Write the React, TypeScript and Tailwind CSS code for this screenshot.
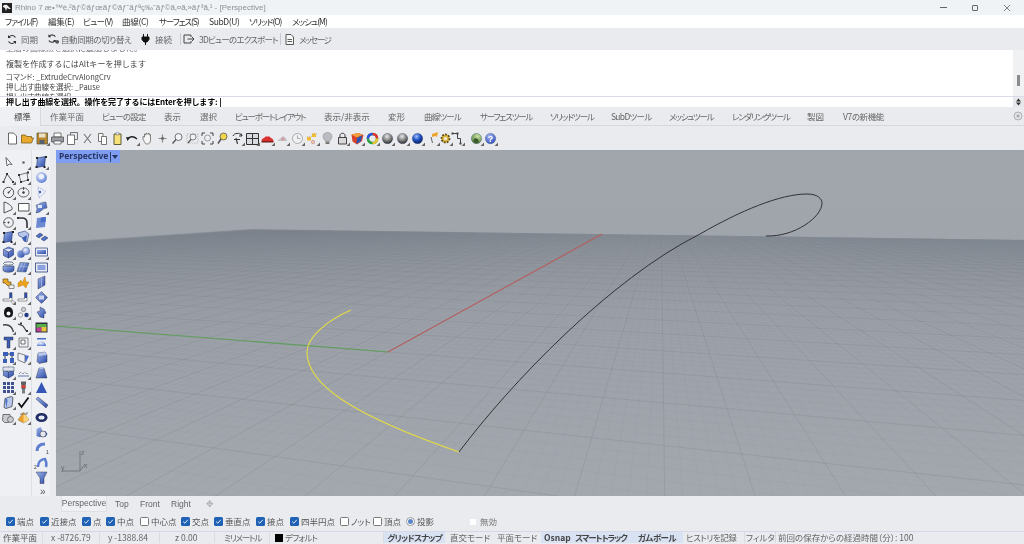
import React from "react";

const S = ({ children, t = true }: { children?: React.ReactNode; t?: boolean }) => (
  <svg width="15" height="15" viewBox="0 0 15 15" className="block shrink-0">
    {children}
    {t && <path d="M15 15h-3.500l3.500-3.500z" fill="#666" />}
  </svg>
);

const blue = "url(#gBlue)";
const Surf = () => <path d="M3.5 3l8-1.5-1 9.5-8 1.5z" fill={blue} stroke="#2c3f78" strokeWidth=".7" />;
const Box = () => <path d="M2.5 4.5l5-2.5 5 2v6l-5 3-5-2.5zM2.5 4.5l5 2.5 5-3M7.5 7v6" fill={blue} stroke="#27386e" strokeWidth=".6" />;
const Ball = ({ f = blue }: { f?: string }) => <circle cx="7.5" cy="7.5" r="5.2" fill={f} stroke="#33436f" strokeWidth=".3" />;
const Ln = ({ d, w = 0.9, c = "#444" }: { d: string; w?: number; c?: string }) => (
  <path d={d} fill="none" stroke={c} strokeWidth={w} />
);

const top: React.ReactNode[] = [
  <S t={false}><path d="M3.5 2h5l3 3v8h-8z" fill="#fff" stroke="#444" strokeWidth=".8" /></S>,
  <S t={false}><path d="M1.5 12V4h4l1 1.5h5V7h2l-2 5z" fill="#e8a92c" stroke="#6e5210" strokeWidth=".7" /></S>,
  <S><path d="M2 2h10.5v11H2z" fill="#b8862b" stroke="#58503a" strokeWidth=".7" /><path d="M4 2.5h6.5v4H4z" fill="#e9e2c8" /><path d="M4.5 9h5v4h-5z" fill="#55606e" /></S>,
  <S t={false}><path d="M4 2h7v4H4z" fill="#fff" stroke="#444" strokeWidth=".7" /><path d="M1.5 6h12v5h-12z" fill="#9a9da3" stroke="#444" strokeWidth=".7" /><path d="M4 10h7v3H4z" fill="#fff" stroke="#444" strokeWidth=".7" /></S>,
  <S t={false}><path d="M2.5 4h7v9.5h-7z" fill="#fff" stroke="#555" strokeWidth=".8" /><path d="M5.5 4V1.500h7v7h-3" fill="none" stroke="#555" strokeWidth=".8" /></S>,
  <S t={false}><Ln d="M4 3l7 9M11 3l-7 9" w={1.1} c="#777" /></S>,
  <S t={false}><path d="M3.5 2.5h4.500v8h-4.500z" fill="#fff" stroke="#555" strokeWidth=".8" /><path d="M6.5 5.500h5v8h-5z" fill="#fff" stroke="#555" strokeWidth=".8" /></S>,
  <S t={false}><path d="M4 3h7v10.500H4z" fill="#f5e37a" stroke="#4d4a2c" strokeWidth=".9" /><path d="M6 1.800h3v2H6z" fill="#fff" stroke="#555" strokeWidth=".5" /></S>,
  <S><Ln d="M2.5 8.500C4 5.500 8 4.500 12 8" w={1.5} c="#222" /><path d="M1 6l4 .5-2.500 3.500z" fill="#222" /></S>,
  <S t={false}><path d="M3 8V5.500l1.500.5V3l1.500 1V2l1.500 1 1.500-1v2l1.500-.5V9c0 3-1.500 4-3.500 4S5 12 3 8z" fill="#f4f4f4" stroke="#555" strokeWidth=".7" /></S>,
  <S t={false}><Ln d="M7.5 3.500v8M3.500 7.500h8" w={1.2} c="#8a8a8a" /><circle cx="7.5" cy="7.5" r="1.4" fill="#666" /></S>,
  <S t={false}><circle cx="8.5" cy="6" r="3.5" fill="#f1f3f7" stroke="#666" strokeWidth=".9" /><Ln d="M6 8.500l-3.500 4" w={1.4} c="#555" /></S>,
  <S t={false}><path d="M2 3h11v9H2z" fill="none" stroke="#999" strokeWidth=".6" strokeDasharray="1.5 1" /><circle cx="8" cy="6" r="3" fill="#f1f3f7" stroke="#666" strokeWidth=".8" /><Ln d="M6 8.500l-3 3.500" w={1.2} c="#555" /></S>,
  <S t={false}><Ln d="M2 5V2h3M10 2h3v3M13 10v3h-3M5 13H2v-3" w={1} c="#444" /><circle cx="7.5" cy="7" r="3" fill="#eef0f5" stroke="#777" strokeWidth=".7" /></S>,
  <S t={false}><circle cx="8.5" cy="5.5" r="3.5" fill="#f2d64b" stroke="#555" strokeWidth=".8" /><Ln d="M6 8l-3 4.500" w={1.5} c="#555" /></S>,
  <S><Ln d="M3 5c1-3 7-4 9 0M12 5l-1-2.500M12 5l-3 0" w={1} c="#333" /><Ln d="M6 7l1.500 6M4 8.500h6" w={1.1} c="#333" /></S>,
  <S><path d="M1.5 2.500h12v11h-12z" fill="#d8dadf" stroke="#333" strokeWidth="1" /><Ln d="M7.5 2.500v11M1.500 7.500h12" w={1} c="#333" /></S>,
  <S><path d="M1.5 10c0-2.500 2.500-2.500 4-4.500h4c1.500 2 4 2 4 4.500z" fill="#d9302e" /><path d="M1.5 10h12v1.500h-12z" fill="#7a1f1d" /></S>,
  <S><path d="M3 10c0-2 3-2 4-4.500h2c1.500 2 3 2.500 3 4.500z" fill="#bfc1c7" /><circle cx="8" cy="8" r="1.5" fill="#d99" /></S>,
  <S><circle cx="7.5" cy="7.5" r="5" fill="#f0f1f3" stroke="#999" strokeWidth=".8" /><Ln d="M7.5 4.500v3h3" w={.8} c="#999" /></S>,
  <S><path d="M2 5.500h5v-3h5" fill="none" stroke="#a88" strokeWidth=".5" strokeDasharray="1 1" /><path d="M7 2.500h4v3.500H7z" fill="#eebb33" /><path d="M2 6h4v3.500H2z" fill="#eebb33" /><circle cx="8" cy="11" r="1.7" fill="#e8c8a8" stroke="#b77" strokeWidth=".5" /></S>,
  <S t={false}><path d="M7.5 1.500c3 0 4.500 2 4.500 4 0 2-1.500 3-2 4.500H5C4.500 8.500 3 7.500 3 5.500c0-2 1.500-4 4.500-4z" fill="#b9bcc2" stroke="#888" strokeWidth=".5" /><path d="M5.5 10.500h4v2.500h-4z" fill="#777" /></S>,
  <S><path d="M3.5 6.500h8v6.500h-8z" fill="#d8d8d8" stroke="#333" strokeWidth=".9" /><Ln d="M5 6.500V4.500c0-3 5-3 5 0v2" w={1} c="#333" /></S>,
  <S><path d="M1.5 3.500l7-1.500 5 2-1.500 6-5 3.500-4.500-3z" fill="#d9402a" /><path d="M7 7l5-3-1 6-4.500 3z" fill="#2b55b5" /><path d="M1.5 3.500l7-1.500 4 2-6 2.500z" fill="#f2a138" /></S>,
  <S><circle cx="7.5" cy="7.5" r="4.6" fill="none" stroke="#2f9e44" strokeWidth="2.5" /><path d="M7.5 2.900a4.600 4.600 0 0 1 4.600 4.600" fill="none" stroke="#e8312f" strokeWidth="2.5" /><path d="M12.1 7.500a4.600 4.600 0 0 1-4.600 4.600" fill="none" stroke="#e8c52f" strokeWidth="2.5" /><path d="M2.9 7.500a4.600 4.600 0 0 1 4.600-4.600" fill="none" stroke="#2f4de8" strokeWidth="2.5" /></S>,
  <S><Ball f="url(#gGray)" /></S>,
  <S><Ball f="url(#gGray)" /></S>,
  <S><Ball f="url(#gDeep)" /></S>,
  <S><path d="M7 3l6-2-1 5-1.500-1-3.500 1z" fill="#eda52f" /><path d="M6 6l1.500 6" stroke="#666" fill="none" /></S>,
  <S><circle cx="7.5" cy="7.5" r="4" fill="#e0b93f" stroke="#5a4a18" strokeWidth="1.8" strokeDasharray="1.8 1.2" /><circle cx="7.5" cy="7.5" r="1.5" fill="#eee" /></S>,
  <S><Ln d="M2.5 2.500h5v5h3v5" w={1} c="#444" /><path d="M1.5 1.500h2v2h-2zM6.500 1.500h2v2h-2zM9.500 11.500h2v2h-2z" fill="#444" /></S>,
  <S><Ball f="url(#gGreen)" /><path d="M4 10l2-3 3 1 1 3-3 1.500z" fill="#3b5a2a" /></S>,
  <S><Ball f="url(#gHelp)" /><text x="7.5" y="10.600" textAnchor="middle" fontSize="9" fontWeight="700" fill="#fff" fontFamily="Liberation Sans">?</text></S>,
];

const col1: React.ReactNode[] = [
  <S t={false}><path d="M5 2.500l1 8.500 2-2 3 .5z" fill="#fff" stroke="#444" strokeWidth=".8" /></S>,
  <S><Ln d="M2.5 12l3.500-8 6 8" /><path d="M5 3h2v2H5zM1.500 11h2v2h-2zM11 11h2v2h-2z" fill="#333" /></S>,
  <S><circle cx="7.5" cy="7.5" r="5.2" fill="none" stroke="#444" strokeWidth=".9" /><Ln d="M7.5 7.500l3-3" /><circle cx="7.5" cy="7.5" r="1" fill="#444" /></S>,
  <S><Ln d="M3 2v11l8-3.500c1-2-2-6-8-7.500z" /></S>,
  <S><circle cx="7.5" cy="7.5" r="4.8" fill="none" stroke="#555" strokeWidth=".9" /><circle cx="7.5" cy="7.5" r="1" fill="#444" /><Ln d="M2.500 7.500h2" /></S>,
  <S><Surf /><path d="M2 2h2v2H2zM11 1h2v2h-2zM1.500 11h2v2h-2zM9.500 11h2v2h-2z" fill="#222" /></S>,
  <S><Box /></S>,
  <S><ellipse cx="7.5" cy="3.5" rx="5" ry="1.7" fill="#eef0f5" stroke="#345" strokeWidth=".7" /><path d="M2 6h11v4c0 3-11 3-11 0z" fill={blue} stroke="#234" strokeWidth=".5" /></S>,
  <S t={false}><path d="M2 4h5v3h3v3l-3 1-3-3H2z" fill="#e8a92c" stroke="#6e5210" strokeWidth=".7" /><path d="M8 10h5v3.500H8z" fill="#f2f2f2" stroke="#666" strokeWidth=".7" /></S>,
  <S><path d="M2 11V9h6.500V2.500h2.500V11z" fill="#fff" stroke="#555" strokeWidth=".6" /><path d="M8.500 3h2.500v5H8.500z" fill="#2f4d9e" /><circle cx="12" cy="12" r="1.4" fill="#fff" stroke="#666" strokeWidth=".5" /></S>,
  <S><path d="M7.5 2c3 0 4.500 2.500 4.500 6 0 3-1.500 4.500-4.500 4.500S3 11 3 8c0-3.500 1.500-6 4.500-6z" fill="#15151a" /><circle cx="7.5" cy="8.5" r="2" fill="#fff" /></S>,
  <S><Ln d="M2 5c5-1 9 1 10.500 7" w={1.4} c="#444" /></S>,
  <S><path d="M3 2h9v3H9v8H6V5H3z" fill="#3d5fb5" stroke="#223" strokeWidth=".4" /></S>,
  <S><path d="M2 2h5v4H2z" fill="#3d5fb5" /><path d="M9 8h4v5H9z" fill="#3d5fb5" /><path d="M2 9h4v4H2z" fill="#3d5fb5" /><path d="M9 2h4v4H9z" fill="#3d5fb5" /><Ln d="M4 6v3M11 6v2M7 4h2" c="#222" /></S>,
  <S><Box /><path d="M2 2h11v4H2z" fill="#dfe4ef" stroke="#345" strokeWidth=".5" /></S>,
  <S><path d="M2 2h3v3H2zM6 2h3v3H6zM10 2h3v3h-3zM2 6h3v3H2zM6 6h3v3H6zM10 6h3v3h-3zM2 10h3v3H2zM6 10h3v3H6zM10 10h3v3h-3z" fill="#3f5190" /></S>,
  <S><path d="M4 3.500l6-2 2 1-1 9-6 2-2-1z" fill="#b9c7ea" stroke="#334" strokeWidth=".7" /><path d="M4 3.500l2.500 1-1 9z" fill="#4a6dc7" /></S>,
  <S><path d="M2 4.500h7l1 6-2.500 2H3.500l-2-2z" fill="#c8cad0" stroke="#555" strokeWidth=".8" /><circle cx="9.5" cy="9.5" r="3" fill="#c8cad0" stroke="#555" strokeWidth=".7" /></S>,
];

const col2: React.ReactNode[] = [
  <S><circle cx="7.5" cy="7.5" r="1.3" fill="#666" /></S>,
  <S><Ln d="M3 5l9-2.500M3 5l2 7 7-2-1-7" w={.7} /><path d="M2 4h2v2H2zM11 1.500h2v2h-2zM11 9h2v2h-2zM4 11h2v2H4z" fill="#333" /></S>,
  <S><ellipse cx="7.5" cy="7.5" rx="5.5" ry="4.5" fill="none" stroke="#555" strokeWidth=".9" /><circle cx="7.5" cy="7.5" r="1.2" fill="#333" /><Ln d="M7.500 2v3" /></S>,
  <S><path d="M2.500 3.500h10.500v7.500H2.500z" fill="#fff" stroke="#444" strokeWidth=".9" /></S>,
  <S><Ln d="M2 3h4c3 0 5 2 5 5v5" w={1.6} c="#333" /><path d="M1 2h2v2H1z" fill="#333" /></S>,
  <S><path d="M2 3l7-2 4 3-2 8-3-1-2-4-3-1z" fill="#b8c6ea" stroke="#2c3f78" strokeWidth=".6" /><path d="M6 8l5-3-1 7-2-1z" fill="#3d5fb5" /></S>,
  <S><circle cx="5" cy="9" r="3.8" fill={blue} /><circle cx="10" cy="6" r="3.8" fill="url(#gLight)" stroke="#345" strokeWidth=".3" /></S>,
  <S><path d="M4 2.500l9 .5-3 9-9-.5z" fill={blue} stroke="#345" strokeWidth=".5" /><Ln d="M6 3l-3 8.500M9 3l-3 9M3 6l9 1" w={.4} c="#dde" /></S>,
  <S t={false}><path d="M2 8l3-3 1 3 3-6 1 5 3 0-2 3-1 3-3-3-5 2z" fill="#eda31b" stroke="#a66d10" strokeWidth=".4" /></S>,
  <S><path d="M2 11V9h6.500V2.500h2.500V11z" fill="#fff" stroke="#555" strokeWidth=".6" /><path d="M8.500 3h2.500v5H8.500z" fill="#2f4d9e" /></S>,
  <S><circle cx="7.5" cy="4.5" r="2.2" fill="#c9ccd4" stroke="#555" strokeWidth=".5" /><circle cx="4.5" cy="10" r="2.2" fill="#f2f2f2" stroke="#555" strokeWidth=".5" /><circle cx="10.5" cy="10" r="2.2" fill="#243a85" /></S>,
  <S><Ln d="M2 4l5 2 4 6" w={1.3} c="#444" /><path d="M4 2.500h2v2H4zM10 10h2v2h-2z" fill="#333" /></S>,
  <S><path d="M3 3h9v9H3z" fill="none" stroke="#555" strokeWidth=".7" /><path d="M5 5h4v4H5z" fill="#fff" stroke="#333" strokeWidth=".7" /></S>,
  <S><path d="M2 3l7 2v8l-7-3z" fill="#eef0f5" stroke="#555" strokeWidth=".7" /><path d="M9 5l4 1-3 6-1-.5z" fill="#4a6dc7" /></S>,
  <S><path d="M2 10h11v2H2z" fill="#a9b4d1" /><path d="M3 9l2-2 2 2 2-2 2 2 1-1" fill="none" stroke="#445" strokeWidth=".8" strokeDasharray="1 1" /></S>,
  <S><path d="M5 1.500h5v3H5zM5.500 4.500h4V9h-4z" fill="#5c6064" /><path d="M5.500 5h4v3h-4z" fill="#d14138" /><path d="M6 9h3v4.500H6z" fill="#7a7e82" /></S>,
  <S t={false}><Ln d="M2.500 8l3 4L12.500 2.500" w={1.8} c="#111" /></S>,
  <S><path d="M7.500 2l5.500 8-5.500 3L2 10z" fill="#eca02c" stroke="#775" strokeWidth=".5" /><path d="M7.500 2l5.500 8-5.500 3z" fill="#f7d27a" /><Ln d="M4 4h7M11 4V2" w={.7} c="#555" /></S>,
];

const col3: React.ReactNode[] = [
  <S><Surf /><path d="M2 2h2v2H2zM11 1h2v2h-2zM1.500 11h2v2h-2zM9.500 11h2v2h-2z" fill="#222" /></S>,
  <S t={false}><circle cx="7.5" cy="7.5" r="5.4" fill="url(#gLight)" /><circle cx="7.5" cy="6.5" r="2.5" fill="#eef3ff" /></S>,
  <S t={false}><path d="M4 2l8 4.500L5 13z" fill="#eaeefa" stroke="#6b86c9" strokeWidth=".6" strokeDasharray="1.5 1" /><circle cx="6" cy="7" r="1.2" fill="#3d5fb5" /></S>,
  <S><path d="M2 5c3 0 4-3 10-3l1 6c-5 0-6 5-11 5l1-4z" fill={blue} stroke="#345" strokeWidth=".4" /><path d="M4 5h4v3H4z" fill="#dfe6f7" /></S>,
  <S t={false}><path d="M3 3l9-1-1 10-9 1z" fill="#6d89d1" /><path d="M7 2.500l5-.5-.5 5-5 .5z" fill="#4a6dc7" /></S>,
  <S t={false}><path d="M2 6l4-3 3 2-4 3zM7 9l4-3 3 2-4 3z" fill="#4a6dc7" stroke="#223" strokeWidth=".4" /></S>,
  <S><path d="M1.500 3h12v8h-12z" fill="#e8ebf4" stroke="#2c3f78" strokeWidth=".7" /><path d="M3 5h9v4H3z" fill={blue} /></S>,
  <S t={false}><path d="M1.500 3h12v9h-12z" fill="#e8ebf4" stroke="#2c3f78" strokeWidth=".8" /><path d="M3.500 5h8v5h-8z" fill="#8aa3e0" /></S>,
  <S t={false}><path d="M4 4l7-3v9l-7 4z" fill={blue} stroke="#223" strokeWidth=".4" /><Ln d="M7.500 2.500v10" w={.5} c="#dde" /></S>,
  <S t={false}><path d="M7.500 1.500l6 6-6 6-6-6z" fill={blue} stroke="#223" strokeWidth=".4" /><path d="M5 5.500h5v4H5z" fill="#cdd6ee" /></S>,
  <S t={false}><path d="M3 7l3-1V2l4 2 2 4-2 1v4l-4-1z" fill={blue} stroke="#223" strokeWidth=".4" /></S>,
  <S t={false}><path d="M1.500 2.500h12v10h-12z" fill="#2c2f38" /><path d="M2.500 4h10v3l-10 1z" fill="#55b04a" /><path d="M2.500 8l5-1v4.500h-5z" fill="#c33ca0" /><path d="M7.500 7l5 0v4.500h-5z" fill="#e8c53f" /></S>,
  <S t={false}><path d="M3 11a4.500 4.500 0 0 1 9 0z" fill="url(#gLight)" /><path d="M3 3h9v1.500H3z" fill="#4a6dc7" /></S>,
  <S t={false}><path d="M4 3l7-1 2 3v7l-8 1.500-2-2z" fill={blue} stroke="#223" strokeWidth=".4" /><path d="M4 3l7-1 2 3-8 1z" fill="#b8c6ea" /></S>,
  <S t={false}><path d="M5 3h5l3 10H2z" fill={blue} stroke="#223" strokeWidth=".4" /><ellipse cx="7.5" cy="3" rx="2.5" ry="1" fill="#b8c6ea" /></S>,
  <S t={false}><path d="M7.500 2l5.500 11H2z" fill="#3657b7" /></S>,
  <S t={false}><path d="M2 4l2-2 10 8-2 3z" fill={blue} stroke="#223" strokeWidth=".4" /></S>,
  <S t={false}><ellipse cx="7.5" cy="7.5" rx="6" ry="4.6" fill="#1f2c63" /><ellipse cx="7.5" cy="7.5" rx="3" ry="2" fill="#e8ecf7" /></S>,
  <S t={false}><path d="M2.500 11V4l4-2 2 4h3l2 3-2 3H5z" fill={blue} /><circle cx="9" cy="9" r="3" fill="#e5e7ec" stroke="#445" strokeWidth=".6" /></S>,
  <S t={false}><Ln d="M3 11c0-5 3-7 8-7" w={3} c="#5e7fd0" /><text x="12" y="14" fontSize="5" fill="#333" fontFamily="Liberation Sans">1</text></S>,
  <S t={false}><Ln d="M4 12c0-5 3-8 7-8 1 2 2 5 1 8" w={2.5} c="#5e7fd0" /><text x="0" y="14" fontSize="5" fill="#333" fontFamily="Liberation Sans">2</text></S>,
  <S t={false}><path d="M2 2h11l-3 6v5.500H6V8z" fill={blue} stroke="#223" strokeWidth=".4" /></S>,
];

const menus: [string, number, string][] = [
  ["ファイル(F)", 43, "tracking-[-1.1px]"], ["編集(E)", 35, "tracking-[-0.3px]"], ["ビュー(V)", 39, "tracking-[-0.7px]"], ["曲線(C)", 37, "tracking-[-0.3px]"], ["サーフェス(S)", 50, "tracking-[-1.1px]"], ["SubD(U)", 40, "tracking-[-0.4px]"], ["ソリッド(O)", 43, "tracking-[-1px]"], ["メッシュ(M)", 40, "tracking-[-1px]"],
];
const tabs: [string, number, string][] = [
  ["作業平面", 52, ""], ["ビューの設定", 62, "tracking-[-0.8px]"], ["表示", 36, ""], ["選択", 35, ""], ["ビューポートレイアウト", 89, "tracking-[-1.2px]"], ["表示/非表示", 64, ""], ["変形", 36, ""], ["曲線ツール", 56, "tracking-[-0.8px]"], ["サーフェスツール", 70, "tracking-[-1.2px]"], ["ソリッドツール", 61, "tracking-[-1.1px]"], ["SubDツール", 58, "tracking-[-0.7px]"], ["メッシュツール", 63, "tracking-[-1.3px]"], ["レンダリングツール", 75, "tracking-[-1.3px]"], ["製図", 36, ""], ["V7の新機能", 44, "tracking-[-0.4px]"],
];

const Check = ({ on = true }: { on?: boolean }) =>
  on ? (
    <span className="w-[9px] h-[9px] rounded-[1.5px] bg-[#1f62b5] flex items-center justify-center shrink-0">
      <svg width="7" height="7" viewBox="0 0 7 7"><path d="M1.200 3.600l1.600 1.600 3-3.400" fill="none" stroke="#fff" strokeWidth=".9" /></svg>
    </span>
  ) : (
    <span className="w-[9px] h-[9px] rounded-[1.5px] bg-white border border-[#777] shrink-0" />
  );

const snaps: [string, boolean, number][] = [
  ["端点", true, 34], ["近接点", true, 42], ["点", true, 24], ["中点", true, 34], ["中心点", false, 41], ["交点", true, 33], ["垂直点", true, 42], ["接点", true, 34], ["四半円点", true, 50], ["ノット", false, 33], ["頂点", false, 33],
];

const O = [388, 353], VX = [661, 203], VY = [-1500, 209];
const a = 0.026, b = 0.00424;
const P = (u: number, v: number) => {
  const d = 1 + a * u + b * v;
  return [(O[0] + a * u * VX[0] + b * v * VY[0]) / d, (O[1] + a * u * VX[1] + b * v * VY[1]) / d];
};
const gridLine = (k: string, p: number[], q: number[], major: boolean) => (
  <line key={k} x1={p[0]} y1={p[1]} x2={q[0]} y2={q[1]} stroke={major ? "#7d828b" : "#868b94"} strokeOpacity={major ? 0.42 : 0.2} strokeWidth={major ? 0.7 : 0.5} />
);
const grid: React.ReactNode[] = [];
for (let v = -190; v <= 219; v++) {
  const um = Math.max(-25, (0.02 - 1 - b * v) / a);
  grid.push(gridLine("v" + v, P(um, v), P(140, v), v % 5 === 0));
}
for (let u = -25; u <= 140; u++) {
  const vm = Math.max(-190, (0.02 - 1 - a * u) / b);
  grid.push(gridLine("u" + u, P(u, vm), P(u, 219), u % 5 === 0));
}

const Viewport = () => (
  <svg viewBox="56 151 968 346" width="968" height="346" className="block">
    <defs>
      <linearGradient id="gSky" x1="0" y1="0" x2="0" y2="1">
        <stop offset="0" stopColor="#a1a6ad" />
        <stop offset="1" stopColor="#9ea3ab" />
      </linearGradient>
      <linearGradient id="gGround" gradientUnits="userSpaceOnUse" x1="0" y1="230" x2="0" y2="497">
        <stop offset="0" stopColor="#8f939b" />
        <stop offset=".3" stopColor="#9b9fa7" />
        <stop offset="1" stopColor="#a3a8af" />
      </linearGradient>
      <clipPath id="cGround"><path d="M56 243L250 230L1024 241V497H56z" /></clipPath>
    </defs>
    <rect x="56" y="151" width="968" height="346" fill="url(#gSky)" />
    <path d="M56 243L250 230L1024 241V497H56z" fill="url(#gGround)" />
    <g clipPath="url(#cGround)">{grid}</g>
    <path d="M56 327L388 353" stroke="#5f9f5c" strokeWidth="1.2" fill="none" />
    <path d="M388 353L602 235" stroke="#b4605f" strokeWidth="1.2" fill="none" />
    <path d="M351 311C328 321 307 338 307 353C307 385 350 415 459 453" fill="none" stroke="#e2da48" strokeWidth="1.2" />
    <path d="M459 453C510 385 610 280 700 235C740 212 780 195 807 195C818 195 822 200 822 204C822 218 795 238 766 237" fill="none" stroke="#2f3238" strokeWidth="1" />
    <path d="M80 472V452M80 472L85 465M80 472H62" stroke="#6a6e75" strokeWidth=".8" fill="none" />
    <text x="81" y="456" fontSize="7" fill="#6a6e75" fontFamily="Liberation Sans">z</text>
    <text x="84" y="469" fontSize="7" fill="#6a6e75" fontFamily="Liberation Sans">x</text>
    <text x="61" y="471" fontSize="7" fill="#6a6e75" fontFamily="Liberation Sans">y</text>
  </svg>
);

const Cell = ({ w, children, cls = "" }: { w: number; children: React.ReactNode; cls?: string }) => (
  <div style={{ width: w }} className={"shrink-0 whitespace-nowrap " + cls}>{children}</div>
);

export default function App() {
  return (
    <div className="w-[1024px] h-[544px] overflow-hidden flex flex-col bg-[#e9ebee] text-[8.5px] leading-none text-[#555] [font-family:'Noto_Sans_CJK_JP','Liberation_Sans',sans-serif] [font-feature-settings:'palt'] blur-[0.3px]">
      <svg width="0" height="0" className="absolute">
        <defs>
          <linearGradient id="gBlue" x1="0" y1="0" x2="1" y2="1"><stop offset="0" stopColor="#9db4ea" /><stop offset="1" stopColor="#2a4aa8" /></linearGradient>
          <radialGradient id="gLight" cx=".4" cy=".35" r=".7"><stop offset="0" stopColor="#f3f6ff" /><stop offset="1" stopColor="#5577cf" /></radialGradient>
          <radialGradient id="gGray" cx=".45" cy=".3" r=".7"><stop offset="0" stopColor="#e8e8e8" /><stop offset=".6" stopColor="#7b7b7b" /><stop offset="1" stopColor="#2e2e2e" /></radialGradient>
          <radialGradient id="gDeep" cx=".4" cy=".3" r=".75"><stop offset="0" stopColor="#9ec3ff" /><stop offset=".5" stopColor="#1e4cc0" /><stop offset="1" stopColor="#0b1d55" /></radialGradient>
          <radialGradient id="gGreen" cx=".6" cy=".3" r=".8"><stop offset="0" stopColor="#c9e0a4" /><stop offset="1" stopColor="#4d7a3a" /></radialGradient>
          <radialGradient id="gHelp" cx=".4" cy=".3" r=".8"><stop offset="0" stopColor="#a7b8f2" /><stop offset="1" stopColor="#2a45b8" /></radialGradient>
        </defs>
      </svg>

      <div className="h-[15px] bg-[#eff3f6] flex items-center pl-[2px] shrink-0">
        <svg width="10" height="10" viewBox="0 0 10 10" className="shrink-0"><path d="M0 0h10v10H0z" fill="#222" /><path d="M1 3c2-2 4-1 5 0l3 3-2 0-2-1-1 3-1-3-2-1z" fill="#eee" /></svg>
        <span className="ml-[3px] text-[#8b8f94] whitespace-nowrap [font-family:'Liberation_Sans','Noto_Sans',sans-serif] text-[8px]">Rhino 7 æ•™è‚²ãƒ©ãƒœãƒ©ãƒˆãƒªç‰ˆãƒ©ã‚¤ã‚»ãƒ³ã‚¹ - [Perspective]</span>
        <div className="ml-auto flex items-center gap-[25px] pr-[13px]">
          <span className="w-[7px] h-px bg-[#666]" />
          <span className="w-[6px] h-[6px] border border-[#666] rounded-[1px]" />
          <svg width="8" height="8" viewBox="0 0 8 8"><path d="M1 1l6 6M7 1L1 7" stroke="#666" strokeWidth=".8" /></svg>
        </div>
      </div>

      <div className="h-[13px] bg-white flex items-center pl-[5px] text-[#333] shrink-0">
        {menus.map(([m, w, c]) => <Cell key={m} w={w} cls={c}>{m}</Cell>)}
      </div>

      <div className="h-[22px] flex items-center pl-[7px] text-[#666] shrink-0 whitespace-nowrap">
        <svg width="10" height="11" viewBox="0 0 10 11" className="shrink-0"><path d="M8.500 3.500A4 4 0 0 0 2 3M1.500 7.500A4 4 0 0 0 8 8" fill="none" stroke="#333" strokeWidth="1.1" /><path d="M1 1v3h3zM9 10V7H6z" fill="#333" /></svg>
        <span className="ml-[4px] w-[26px] shrink-0">同期</span>
        <svg width="13" height="12" viewBox="0 0 14 12" className="shrink-0"><path d="M9 3.500A4 4 0 0 0 2.500 3M2 7.500A4 4 0 0 0 8.500 8" fill="none" stroke="#333" strokeWidth="1.1" /><path d="M1.500 1v3h3zM9.500 10V7h-3z" fill="#333" /><circle cx="11" cy="9" r="2" fill="#555" /></svg>
        <span className="ml-[1px] w-[80px] shrink-0 tracking-[-0.4px]">自動同期の切り替え</span>
        <svg width="9" height="12" viewBox="0 0 9 12" className="shrink-0"><path d="M1 4h7v2.500L6 9H3L1 6.500zM2.500 1v3M6.500 1v3M4.500 9v3" fill="#111" stroke="#111" /></svg>
        <span className="ml-[5px] w-[25px] shrink-0">接続</span>
        <span className="w-px h-[12px] bg-[#c8cbd0] shrink-0" />
        <svg width="12" height="10" viewBox="0 0 12 10" className="ml-[2px] shrink-0"><path d="M8 3V1H1v8h7V7M4.500 5H11M9 3l2 2-2 2" fill="none" stroke="#444" strokeWidth="1" /></svg>
        <span className="ml-[4px] w-[81px] shrink-0 tracking-[-0.8px]">3Dビューのエクスポート</span>
        <span className="w-px h-[12px] bg-[#c8cbd0] shrink-0" />
        <svg width="9" height="11" viewBox="0 0 9 11" className="ml-[4px] shrink-0"><path d="M1 .5h5l2.500 2.500v7.500H1zM2.500 5.500h4.500M2.500 7.500h4.500" fill="#f7f7f7" stroke="#333" strokeWidth=".8" /></svg>
        <span className="ml-[5px] tracking-[-1.5px]">メッセージ</span>
      </div>

      <div className="h-[47px] bg-white flex shrink-0 border-b border-[#d8dbe8]">
        <div className="flex-1 overflow-hidden relative pl-[6px] text-[#444] text-[8px] [font-feature-settings:normal]">
          <div className="h-[3px] overflow-hidden text-[#666] relative"><div className="-mt-[7px] leading-[10px]">上層の曲線点を選択に追加しました。</div></div>
          <div className="mt-[6px] leading-[10px] tracking-[0.1px]">複製を作成するにはAltキーを押します</div>
          <div className="mt-[3px] leading-[10px] text-[7.5px] [font-feature-settings:'palt']">コマンド: _ExtrudeCrvAlongCrv</div>
          <div className="leading-[10px] text-[7.5px] [font-feature-settings:'palt']">押し出す曲線を選択: _Pause</div>
          <div className="leading-[10px] text-[7.5px] [font-feature-settings:'palt']">押し出す曲線を選択</div>
        </div>
        <div className="w-[11px] bg-[#f0f1f3] flex justify-center pt-[25px]"><span className="w-[3px] h-[11px] bg-[#8a8c90]" /></div>
      </div>
      <div className="h-[10px] bg-white flex items-center shrink-0">
        <span className="ml-[6px] font-bold text-black text-[8px] whitespace-nowrap [font-feature-settings:normal] tracking-[-0.15px]">押し出す曲線を選択。操作を完了するにはEnterを押します:</span>
        <span className="ml-[2px] w-px h-[9px] bg-[#333]" />
        <div className="ml-auto w-[11px] h-full bg-[#e6e7ea] flex flex-col items-center justify-center text-[#333]">
          <svg width="7" height="8" viewBox="0 0 7 8"><path d="M3.500 .5l2.500 3H1zM3.500 7.500l-2.500-3h5z" fill="#333" /></svg>
        </div>
      </div>

      <div className="h-[19px] flex items-stretch border-b border-[#d5d8de] shrink-0 relative">
        <div className="w-[41px] pl-[14px] flex items-center bg-[#eef0f3] border-r border-[#d5d8de] text-[#444] -mb-px">標準</div>
        <div className="ml-[9px] flex items-center text-[#666]">
          {tabs.map(([m, w, c]) => <Cell key={m} w={w} cls={c}>{m}</Cell>)}
        </div>
        <svg width="10" height="10" viewBox="0 0 10 10" className="ml-auto mr-[1px] self-center"><circle cx="5" cy="5" r="4" fill="#e0e2e6" stroke="#999" strokeWidth=".7" /><circle cx="5" cy="5" r="1.500" fill="#aaa" /></svg>
      </div>

      <div className="h-[24px] flex items-center pl-[5px] shrink-0">
        {top.map((n, i) => <div key={i} className={"shrink-0 " + (i === 28 ? "w-[13px]" : i === 29 ? "w-[12px]" : i === 30 ? "w-[19px]" : i === 31 ? "w-[14px]" : "w-[15px]")}>{n}</div>)}
      </div>

      <div className="h-[346px] flex shrink-0">
        <div className="w-[56px] flex shrink-0 bg-[#e9ebee]">
          <div className="w-[32px] bg-[#eef0f3] flex pt-[5px] pl-px border-r border-[#dcdfe4]">
            <div className="flex flex-col">{col1.map((n, i) => <div key={i} className="h-[15px]">{n}</div>)}</div>
            <div className="flex flex-col">{col2.map((n, i) => <div key={i} className="h-[15px]">{n}</div>)}</div>
          </div>
          <div className="w-[18px] bg-[#eef0f3] flex flex-col pt-[5px] pl-[2px]">
            {col3.map((n, i) => <div key={i} className="h-[15px]">{n}</div>)}
            <div className="h-[15px] pl-[6px] pt-[2px] text-[10px] text-[#555] [font-family:'Liberation_Sans',sans-serif]">»</div>
          </div>
        </div>
        <div className="flex-1 relative overflow-hidden">
          <Viewport />
          <div className="absolute left-0 top-0 h-[13px] w-[64px] bg-[#7f9df0] flex items-center pl-[3px]">
            <span className="font-bold text-[8.5px] text-[#263563] w-[51px] [font-family:'Noto_Sans',sans-serif]">Perspective</span>
            <span className="w-px h-[10px] bg-[#30406f]" />
            <svg width="6" height="4" viewBox="0 0 6 4" className="ml-[1px]"><path d="M0 0h6L3 4z" fill="#263563" /></svg>
          </div>
        </div>
      </div>

      <div className="h-[16px] flex items-center pl-[61px] text-[#666] shrink-0 [font-family:'Liberation_Sans',sans-serif] text-[8.5px]">
        <div className="h-[16px] w-[46px] bg-[#eef0f3] border-b border-x border-[#dde0e5] flex items-center justify-center">Perspective</div>
        <div className="ml-[8px] w-[25px]">Top</div>
        <div className="w-[31px]">Front</div>
        <div className="w-[35px]">Right</div>
        <div className="text-[#aaa]">✥</div>
      </div>

      <div className="h-[19px] flex items-center pl-[6px] text-[#555] shrink-0">
        {snaps.map(([t, on, w]) => (
          <div key={t} style={{ width: w }} className="flex items-center gap-[2px] shrink-0 whitespace-nowrap"><Check on={on} /><span>{t}</span></div>
        ))}
        <div className="flex items-center gap-[2px] w-[64px] shrink-0">
          <span className="w-[9px] h-[9px] rounded-full border border-[#999] bg-white flex items-center justify-center"><span className="w-[5px] h-[5px] rounded-full bg-[#5a86c8]" /></span>
          <span>投影</span>
        </div>
        <span className="w-[6px] h-[6px] bg-white" />
        <span className="ml-[4px] text-[#777]">無効</span>
      </div>

      <div className="h-[12px] flex items-stretch border-t border-[#d5d8e5] text-[#666] shrink-0 whitespace-nowrap">
        <Cell w={43} cls="pl-[3px] flex items-center border-r border-[#d8dbe2] text-[#555]">作業平面</Cell>
        <Cell w={57} cls="pl-[8px] flex items-center border-r border-[#d8dbe2]">x -8726.79</Cell>
        <Cell w={60} cls="pl-[8px] flex items-center border-r border-[#d8dbe2]">y -1388.84</Cell>
        <Cell w={55} cls="pl-[15px] flex items-center border-r border-[#d8dbe2]">z 0.00</Cell>
        <Cell w={55} cls="pl-[9px] flex items-center border-r border-[#d8dbe2] tracking-[-1.2px]">ミリメートル</Cell>
        <Cell w={114} cls="pl-[5px] flex items-center border-r border-[#d8dbe2] tracking-[-0.8px]"><span className="w-[8px] h-[8px] bg-black mr-[2px]" />デフォルト</Cell>
        <Cell w={61} cls="bg-[#d9e2f3] flex items-center justify-center font-bold text-[#444] tracking-[-0.8px]">グリッドスナップ</Cell>
        <Cell w={52} cls="pl-[5px] flex items-center">直交モード</Cell>
        <Cell w={44} cls="flex items-center">平面モード</Cell>
        <Cell w={142} cls="bg-[#d9e2f3] flex items-center font-bold text-[#444] pl-[3px]">
          <span className="w-[31px]">Osnap</span><span className="w-[63px] tracking-[-1.1px]">スマートトラック</span><span className="tracking-[-0.5px]">ガムボール</span>
        </Cell>
        <Cell w={62} cls="pl-[3px] flex items-center border-r border-[#d8dbe2] tracking-[-0.5px]">ヒストリを記録</Cell>
        <Cell w={31} cls="pl-[1px] flex items-center border-r border-[#d8dbe2]">フィルタ</Cell>
        <div className="pl-[2px] flex items-center">前回の保存からの経過時間（分）: 100</div>
      </div>
    </div>
  );
}
